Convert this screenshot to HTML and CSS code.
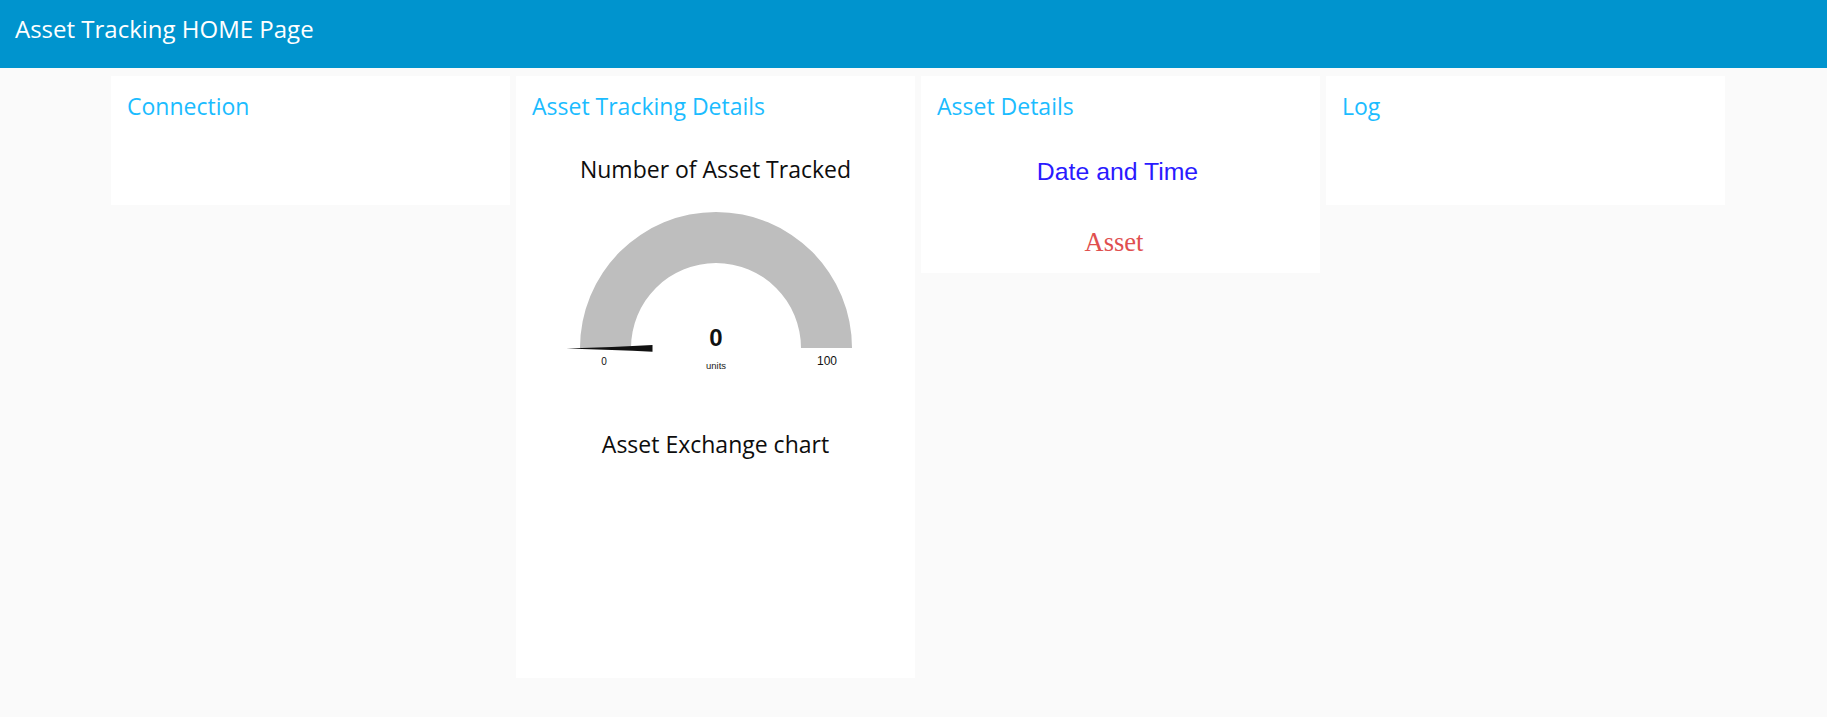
FILE: index.html
```html
<!DOCTYPE html>
<html lang="en">
<head>
<meta charset="utf-8">
<title>Asset Tracking HOME Page</title>
<link rel="stylesheet" href="styles.css">
</head>
<body>
<header class="topbar">
  <h1 class="topbar-title">Asset Tracking HOME Page</h1>
</header>
<main class="board">
  <section class="card card--short">
    <h2 class="card-title">Connection</h2>
  </section>

  <section class="card">
    <h2 class="card-title">Asset Tracking Details</h2>
    <div class="widget-label widget-label--gauge">Number of Asset Tracked</div>
    <div class="gauge">
      <svg class="gauge-svg" width="300" height="180" viewBox="0 0 300 180" xmlns="http://www.w3.org/2000/svg">
        <path d="M14 148 A136 136 0 0 1 286 148 L235 148 A85 85 0 0 0 65 148 Z" fill="#bebebe"/>
        <path d="M0.5 148.4 Q48 147.2 86.5 145 L86.5 151.7 Q48 149.6 0.5 148.4 Z" fill="#111"/>
        <text x="150" y="145.7" text-anchor="middle" class="gauge-value">0</text>
        <text x="150" y="169" text-anchor="middle" class="gauge-units">units</text>
        <text x="38" y="165" text-anchor="middle" class="gauge-min">0</text>
        <text x="261" y="165" text-anchor="middle" class="gauge-max">100</text>
      </svg>
    </div>
    <div class="widget-label widget-label--chart">Asset Exchange chart</div>
    <div class="chart-area"></div>
  </section>

  <section class="card card--details">
    <h2 class="card-title">Asset Details</h2>
    <div class="detail-date">Date and Time</div>
    <div class="detail-asset">Asset</div>
  </section>

  <section class="card card--short">
    <h2 class="card-title">Log</h2>
  </section>
</main>
</body>
</html>
```

FILE: styles.css
```css
html, body {
  margin: 0;
  padding: 0;
}

body {
  background: #fafafa;
  font-family: "Open Sans", "Noto Sans", sans-serif;
  color: #111;
  height: 717px;
  overflow: hidden;
}

.topbar {
  height: 68px;
  background: #0094ce;
  padding: 0 15px;
  box-sizing: border-box;
}

.topbar-title {
  margin: 0;
  font-size: 24px;
  font-weight: 400;
  line-height: 58px;
  color: #ffffff;
}

.board {
  display: flex;
  align-items: flex-start;
  gap: 6px;
  padding: 8px 0 0 111px;
}

.card {
  width: 399px;
  flex: 0 0 399px;
  box-sizing: border-box;
  background: #ffffff;
  padding: 14px 16px 0 16px;
}

.card--short {
  height: 129px;
}

.card--details {
  padding-bottom: 15px;
}

.card-title {
  margin: 0;
  font-size: 23px;
  font-weight: 500;
  line-height: 32px;
  color: #1bbcff;
}

.widget-label {
  text-align: center;
  font-size: 23px;
  font-weight: 500;
  line-height: 32px;
  color: #0d0d0d;
}

.widget-label--gauge {
  margin-top: 31px;
}

.gauge {
  display: flex;
  justify-content: center;
  margin-top: 15px;
}

.gauge-svg {
  display: block;
}

.gauge-value {
  font-family: "Liberation Sans", Arial, sans-serif;
  font-weight: 700;
  font-size: 24px;
  fill: #111;
}

.gauge-units {
  font-family: "Liberation Sans", Arial, sans-serif;
  font-size: 9.5px;
  fill: #222;
}

.gauge-min {
  font-family: "Liberation Sans", Arial, sans-serif;
  font-size: 10px;
  fill: #111;
}

.gauge-max {
  font-family: "Liberation Sans", Arial, sans-serif;
  font-size: 12px;
  fill: #111;
}

.widget-label--chart {
  margin-top: 48px;
}

.chart-area {
  height: 218px;
}

.detail-date {
  margin-top: 34px;
  padding-right: 6px;
  text-align: center;
  font-family: "Liberation Sans", Arial, sans-serif;
  font-size: 24.8px;
  line-height: 32px;
  color: #2a1aff;
}

.detail-asset {
  margin-top: 38px;
  padding-right: 13px;
  text-align: center;
  font-family: "Liberation Serif", "Times New Roman", serif;
  font-size: 26.5px;
  line-height: 32px;
  color: #e04f4f;
}
```
